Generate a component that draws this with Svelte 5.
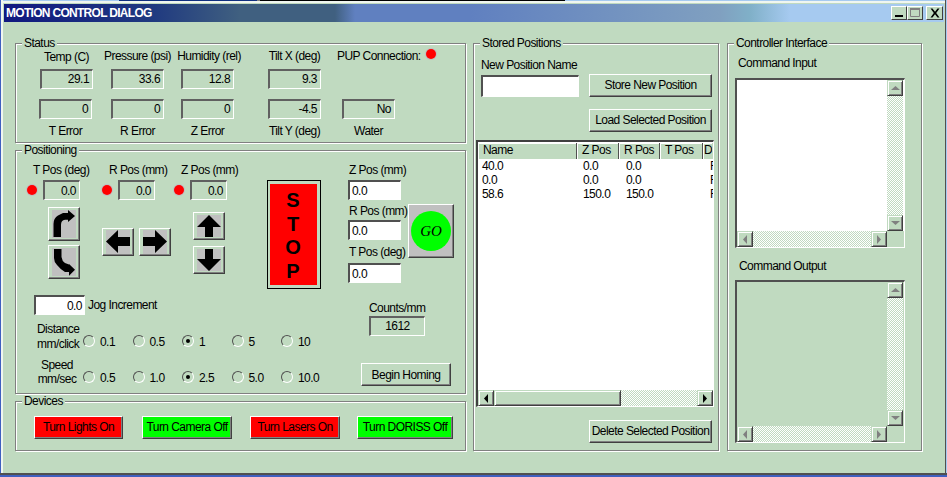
<script>
  const statusTop = [['Temp (C)', '29.1'], ['Pressure (psi)', '33.6'], ['Humidity (rel)', '12.8'], ['Tilt X (deg)', '9.3']];
  const statusBottom = [['T Error', '0'], ['R Error', '0'], ['Z Error', '0'], ['Tilt Y (deg)', '-4.5'], ['Water', 'No']];
  const readouts = ['T Pos (deg)', 'R Pos (mm)', 'Z Pos (mm)'];
  const targets = ['Z Pos (mm)', 'R Pos (mm)', 'T Pos (deg)'];
  const distances = [['0.1', false], ['0.5', false], ['1', true], ['5', false], ['10', false]];
  const speeds = [['0.5', false], ['1.0', false], ['2.5', true], ['5.0', false], ['10.0', false]];
  const devices = [['Turn Lights On', 'red', 89], ['Turn Camera Off', 'green', 90], ['Turn Lasers On', 'red', 90], ['Turn DORISS Off', 'green', 96]];
  const rows = [['40.0', '0.0', '0.0'], ['0.0', '0.0', '0.0'], ['58.6', '150.0', '150.0']];
  const columns = [['Name', 99], ['Z Pos', 42], ['R Pos', 41], ['T Pos', 43], ['D', 9]];
</script>

{#snippet scrollbars()}
  <div class="term-main">
    <div class="vbar">
      <div class="sb-btn"><svg width="9" height="6"><path d="M0 5h9L4.500 1z" fill="#808080"/></svg></div>
      <div class="track"></div>
      <div class="sb-btn"><svg width="9" height="6"><path d="M0 1h9L4.500 5z" fill="#808080"/></svg></div>
    </div>
  </div>
  <div class="hbar term-bar">
    <div class="sb-btn"><svg width="6" height="9"><path d="M5 0v9L1 4.500z" fill="#808080"/></svg></div>
    <div class="track"></div>
    <div class="sb-btn"><svg width="6" height="9"><path d="M1 0v9l4-4.500z" fill="#808080"/></svg></div>
    <div class="corner"></div>
  </div>
{/snippet}

<div class="window">
  <header class="titlebar">
    <span class="title">MOTION CONTROL DIALOG</span>
    <div class="caps">
      <button class="cap" aria-label="Minimize"><svg width="14" height="12"><path d="M3 8h8v2H3z" fill="#000"/></svg></button>
      <button class="cap" aria-label="Maximize"><svg width="14" height="12"><path d="M2.500 1.500h9v8h-9z" fill="none" stroke="#808080"/><path d="M2 1h10v2H2z" fill="#808080"/></svg></button>
      <button class="cap close" aria-label="Close"><svg width="14" height="12"><path d="M2.500 1.500h2L7 4.800 9.500 1.500h2L8.200 6l3.300 4.500h-2L7 7.200 4.500 10.500h-2L5.800 6z" fill="#000"/></svg></button>
    </div>
  </header>

  <main class="body">
    <div class="left">
      <section class="group status">
        <h2 class="legend">Status</h2>
        <div class="status-grid">
          {#each statusTop as [label, value]}
            <div class="cell top"><span class="cap-label">{label}</span><div class="readout">{value}</div></div>
          {/each}
          <div class="cell pup"><span>PUP Connection:</span><i class="led"></i></div>
          {#each statusBottom as [label, value]}
            <div class="cell bottom"><div class="readout">{value}</div><span class="cap-label">{label}</span></div>
          {/each}
        </div>
      </section>

      <section class="group positioning">
        <h2 class="legend">Positioning</h2>
        <div class="pos-top">
          <div class="axes">
            <div class="axis-heads">
              {#each readouts as label}
                <div class="axis-head">
                  <span class="axis-label">{label}</span>
                  <div class="led-row"><i class="led"></i><div class="readout small">0.0</div></div>
                </div>
              {/each}
            </div>
            <div class="jogs">
              <div class="jog-col t">
                <button class="raised icon tall" aria-label="Tilt up">
                  <svg width="24" height="28" viewBox="0 -1 24 28"><path d="M1.500 26V13Q1.500 7 6 4.500L11 2H16V-1L23 5L16 11V8.700H13Q9 9 9 14V26Z" fill="#000"/></svg>
                </button>
                <button class="raised icon tall" aria-label="Tilt down">
                  <svg width="24" height="28" viewBox="0 -1 24 28"><path d="M2 0H9.500V8Q10 12 13 14L17 15.500V15L23 20.700L17 26.700V23H13Q9 21 5 16Q2 13 2 9Z" fill="#000"/></svg>
                </button>
              </div>
              <div class="jog-row r">
                <button class="raised icon" aria-label="Left"><svg width="24" height="24" viewBox="0 0 24 24"><path d="M0 11.500L12 0V7H24V16H12V23Z" fill="#000"/></svg></button>
                <button class="raised icon" aria-label="Right"><svg width="24" height="24" viewBox="0 0 24 24"><path d="M24 11.500L12 0V7H0V16H12V23Z" fill="#000"/></svg></button>
              </div>
              <div class="jog-col z">
                <button class="raised icon" aria-label="Up"><svg width="24" height="22" viewBox="0 0 24 22"><path d="M12 0L24 12H16V22H8V12H0Z" fill="#000"/></svg></button>
                <button class="raised icon" aria-label="Down"><svg width="24" height="22" viewBox="0 0 24 22"><path d="M12 22L24 10H16V0H8V10H0Z" fill="#000"/></svg></button>
              </div>
            </div>
          </div>
          <button class="stop"><span>S</span><span>T</span><span>O</span><span>P</span></button>
          <div class="targets">
            {#each targets as label}
              <span class="target-label">{label}</span>
              <div class="field">0.0</div>
            {/each}
          </div>
          <button class="raised go"><span class="go-disc">GO</span></button>
        </div>
        <div class="pos-bottom">
          <div class="options">
            <div class="jog-inc"><div class="field jog-field">0.0</div><span>Jog Increment</span></div>
            <div class="radio-line">
              <span class="radio-head">Distance<br />mm/click</span>
              {#each distances as [label, on]}
                <span class="radio-item"><i class="radio" class:on></i>{label}</span>
              {/each}
            </div>
            <div class="radio-line">
              <span class="radio-head center">Speed<br />mm/sec</span>
              {#each speeds as [label, on]}
                <span class="radio-item"><i class="radio" class:on></i>{label}</span>
              {/each}
            </div>
          </div>
          <div class="homing">
            <span class="counts-label">Counts/mm</span>
            <div class="readout counts">1612</div>
            <button class="raised homing-btn">Begin Homing</button>
          </div>
        </div>
      </section>

      <section class="group devices">
        <h2 class="legend">Devices</h2>
        <div class="device-row">
          {#each devices as [label, tone, width]}
            <button class="raised device {tone}" style="width:{width}px">{label}</button>
          {/each}
        </div>
      </section>
    </div>

    <section class="group stored">
      <h2 class="legend">Stored Positions</h2>
      <div class="store-top">
        <div class="name-col">
          <span>New Position Name</span>
          <div class="field name-field"></div>
        </div>
        <div class="store-btns">
          <button class="raised store-btn">Store New Position</button>
          <button class="raised store-btn">Load Selected Position</button>
        </div>
      </div>
      <div class="list">
        <div class="list-head">
          {#each columns as [name, width]}
            <div class="th" style="width:{width}px">{name}</div>
          {/each}
        </div>
        <div class="list-body">
          {#each rows as [a, b, c]}
            <div class="tr"><span class="td n">{a}</span><span class="td z">{b}</span><span class="td r">{c}</span><span class="td last">F</span></div>
          {/each}
        </div>
        <div class="hbar">
          <div class="sb-btn"><svg width="6" height="9"><path d="M5 0v9L1 4.500z" fill="#000"/></svg></div>
          <div class="thumb"></div>
          <div class="track"></div>
          <div class="sb-btn"><svg width="6" height="9"><path d="M1 0v9l4-4.500z" fill="#000"/></svg></div>
        </div>
      </div>
      <div class="delete-row"><button class="raised store-btn">Delete Selected Position</button></div>
    </section>

    <section class="group controller">
      <h2 class="legend">Controller Interface</h2>
      <span class="cmd-label first">Command Input</span>
      <div class="term input-term">{@render scrollbars()}</div>
      <span class="cmd-label second">Command Output</span>
      <div class="term output-term">{@render scrollbars()}</div>
    </section>
  </main>
</div>

<style>
  :global(body) { margin: 0; background: #c0dac0; }
  * { box-sizing: border-box; }
  .window {
    position: relative;
    width: 947px; height: 477px; overflow: hidden;
    background: #c0dac0; color: #000;
    font: 12px/13px "Liberation Sans", Arial, sans-serif;
    letter-spacing: -0.55px;
    padding: 4px 3px 0 4px;
    box-shadow: inset 0 -2px 0 #3f60c0, inset 0 -4px 0 #505050, inset -1px 0 0 #a6caf0, inset -2px 0 0 #505050, inset 1px 0 0 #3f60c0, inset 3px 0 0 #f0f6f0, inset 0 1px 0 #a6caf0, inset 0 3px 0 #f0f6f0;
    display: flex; flex-direction: column;
  }
  .window::before {
    content: ""; position: absolute; left: 0; top: 0; width: 947px; height: 1px;
    background: linear-gradient(90deg, transparent 119px, #10307f 119px, #10307f 257px, #808080 257px, #808080 260px, #000 260px, #000 565px, transparent 565px);
  }
  button { font: inherit; letter-spacing: inherit; color: inherit; padding: 0; margin: 0; }
  .titlebar {
    height: 18px; flex: none;
    display: flex; align-items: center; justify-content: space-between;
    background: linear-gradient(90deg, #101880 0, #203a80 150px, #406080 236px, #406080 331px, #6080c0 351px, #6080c0 466px, #80a0c0 716px, #80b0c8 746px, #a6caf0 786px);
    padding: 0 1px 0 2px;
  }
  .title { color: #fff; font-weight: bold; font-size: 12px; letter-spacing: -0.7px; white-space: nowrap; }
  .caps { display: flex; }
  .cap {
    width: 16px; height: 14px; background: #c0dac0; border: 1px solid;
    border-color: #fff #404040 #404040 #fff; display: flex; align-items: center; justify-content: center;
  }
  .close { margin-left: 3px; width: 17px; }
  .cap svg { display: block; flex: none; }

  .body { display: flex; padding: 21px 0 0 11px; align-items: flex-start; }
  .left { width: 451px; display: flex; flex-direction: column; }

  .group { position: relative; border: 1px solid #808080; box-shadow: 1px 1px 0 #fff, inset 1px 1px 0 #fff; }
  .legend {
    position: absolute; top: -7px; left: 6px; margin: 0; padding: 0 2px;
    background: #c0dac0; font: inherit; white-space: nowrap;
  }

  .readout {
    height: 20px; width: 53px; text-align: right; padding: 2px 3px 0 0;
    border: solid; border-width: 2px 1px 1px 2px; border-color: #606060 #fff #fff #606060;
  }
  .field {
    height: 20px; width: 53px; background: #fff; border: solid; border-width: 2px 1px 1px 2px;
    border-color: #505050 #fff #fff #505050; padding: 3px 2px 0 2px;
  }
  .raised {
    background: #c0dac0; border: 1px solid; border-color: #fff #404040 #404040 #fff;
    box-shadow: inset -1px -1px 0 #808080;
    white-space: nowrap; text-align: center;
  }
  .led { display: block; flex: none; width: 10px; height: 10px; border-radius: 50%; background: #f00; box-shadow: 0 0 0 1px #c0c0c0; }

  .status { height: 100px; }
  .status-grid {
    display: grid; grid-template-columns: 71px 70px 87px 74px auto;
    padding: 6px 0 0 24px;
  }
  .cell { display: flex; flex-direction: column; align-items: flex-start; width: 53px; }
  .cap-label { white-space: nowrap; align-self: center; }
  .top .cap-label { height: 19px; }
  .top:first-child .cap-label { padding-top: 1px; }
  .top:nth-child(3) .cap-label { margin-left: 3px; }
  .pup { flex-direction: row; gap: 5px; white-space: nowrap; margin-left: -5px; width: auto; }
  .pup .led { margin-top: -1px; }
  .bottom { padding-top: 10px; }
  .bottom:nth-child(6) { margin-left: -1px; }
  .bottom .cap-label { margin-top: 6px; }

  .positioning { height: 244px; margin-top: 7px; }
  .pos-top { display: flex; padding-top: 12px; height: 144px; }
  .axes { width: 251px; padding-left: 11px; flex: none; }
  .axis-heads { display: flex; }
  .axis-head { width: 72px; display: flex; flex-direction: column; }
  .axis-head:first-child { width: 75px; }
  .axis-label { height: 17px; padding-top: 1px; margin-left: 7px; white-space: nowrap; }
  .axis-head:first-child .axis-label { margin-left: 6px; }
  .led-row { display: flex; align-items: center; gap: 6px; }
  .readout.small { width: 37px; padding-top: 3px; }
  .jogs { display: flex; margin-top: 7px; }
  .jog-col { display: flex; flex-direction: column; }
  .jog-col.t { gap: 4px; margin-left: 21px; }
  .jog-col.z { gap: 6px; margin-left: 22px; margin-top: 5px; }
  .jog-row { display: flex; gap: 5px; margin-left: 22px; margin-top: 21px; align-self: flex-start; }
  .icon { width: 32px; height: 28px; display: flex; align-items: center; justify-content: center; flex: none; }
  .icon svg { display: block; background: #c0c0c0; overflow: visible; flex: none; }
  .icon.tall { height: 34px; }
  .stop {
    width: 54px; height: 109px; margin-top: 17px; flex: none;
    background: #f00; border: 1px solid #000; font-weight: bold; font-size: 20px; line-height: 23.5px; letter-spacing: 0;
    box-shadow: inset 2px 3px 0 #c0dac0, inset -3px -3px 0 #c0dac0;
    display: flex; flex-direction: column; align-items: center; padding: 8px 2px 0 0;
  }
  .stop span { display: block; }
  .targets { width: 53px; margin-left: 27px; flex: none; display: flex; flex-direction: column; }
  .target-label { display: block; height: 17px; padding-top: 1px; margin-left: 1px; white-space: nowrap; }
  .target-label:nth-of-type(2) { height: 15px; margin-top: 5px; padding-top: 0; }
  .target-label:nth-of-type(3) { height: 17px; margin-top: 6px; padding-top: 0; }
  .go {
    width: 46px; height: 54px; margin-left: 7px; margin-top: 41px; flex: none;
    background: #c0c0c0; display: flex; align-items: center; justify-content: center;
  }
  .go-disc {
    display: flex; align-items: center; justify-content: center;
    width: 40px; height: 40px; border-radius: 50%; background: #0f0;
    font: italic 15px "Liberation Serif", serif; letter-spacing: 0;
  }

  .pos-bottom { display: flex; justify-content: space-between; padding-right: 15px; }
  .options { padding-left: 18px; }
  .jog-inc { display: flex; align-items: flex-start; gap: 3px; white-space: nowrap; }
  .jog-field { width: 51px; text-align: right; }
  .jog-inc span { margin-top: 4px; }
  .radio-line { display: flex; align-items: flex-start; height: 36px; }
  .jog-inc + .radio-line { margin-top: 6px; }
  .radio-head { width: 49px; flex: none; padding: 1px 0 0 3px; line-height: 15px; white-space: nowrap; }
  .radio-head.center { text-align: center; padding: 1px 3px 0 0; line-height: 14px; }
  .radio-item { width: 49.500px; display: flex; align-items: flex-start; gap: 5px; padding-top: 15px; white-space: nowrap; }
  .radio {
    display: block; width: 12px; height: 12px; margin-top: -1px; border-radius: 50%; position: relative; flex: none;
    background: #c0dac0; border: 1px solid; border-color: #505050 #fff #fff #505050;
  }
  .radio.on::after {
    content: ""; position: absolute; left: 3px; top: 3px; width: 4px; height: 4px; border-radius: 50%; background: #000;
  }
  .homing { width: 89px; display: flex; flex-direction: column; align-items: flex-start; }
  .counts-label { margin-left: 8px; margin-top: 7px; height: 14px; white-space: nowrap; }
  .counts { width: 56px; margin-left: 8px; text-align: center; padding: 2px 0 0; }
  .homing-btn { width: 90px; height: 23px; margin-top: 27px; padding-top: 1px; flex: none; }

  .devices { height: 50px; margin-top: 7px; }
  .device-row { display: grid; grid-template-columns: 108px 108px 107px auto; padding: 14px 0 0 18px; }
  .device { height: 23px; }
  .red { background: #f00; }
  .green { background: #0f0; }

  .stored { width: 246px; height: 408px; margin-left: 7px; flex: none; }
  .store-top { display: flex; padding: 15px 0 0 7px; height: 96px; }
  .name-col { width: 108px; flex: none; }
  .name-col span { display: block; white-space: nowrap; }
  .name-field { width: 98px; height: 22px; margin-top: 3px; }
  .store-btns { display: flex; flex-direction: column; gap: 12px; margin-top: 15px; }
  .store-btn { width: 123px; height: 23px; flex: none; }
  .list {
    width: 238px; height: 267px; margin-left: 2px; display: flex; flex-direction: column;
    background: #fff; border: solid; border-width: 2px 1px 1px 2px; border-color: #404040 #fff #fff #404040;
    overflow: hidden;
  }
  .list-head { display: flex; height: 16px; background: #c0dac0; overflow: hidden; flex: none; margin-top: 1px; }
  .th { height: 16px; padding: 1px 0 0 5px; border-right: 1px solid #505050; box-shadow: inset 1px 1px 0 #fff; flex: none; white-space: nowrap; overflow: hidden; }
  .th:last-child { border: 0; padding-left: 1px; }
  .list-body { flex: 1; background: #fff; overflow: hidden; }
  .tr { display: flex; height: 14px; line-height: 14px; }
  .td { display: block; flex: none; }
  .td.n { width: 105px; padding-left: 4px; }
  .td.z { width: 43px; }
  .td.r { width: 84px; }
  .td.last { width: 3px; overflow: hidden; }
  .hbar { display: flex; height: 16px; flex: none; background: #c0dac0; }
  .track { flex: 1; background-image: conic-gradient(#fff 25%, #c0dac0 0 50%, #fff 0 75%, #c0dac0 0); background-size: 2px 2px; }
  .sb-btn {
    width: 16px; height: 16px; flex: none; display: flex; align-items: center; justify-content: center;
    background: #c0dac0; border: 1px solid; border-color: #c0dac0 #404040 #404040 #c0dac0;
    box-shadow: inset 1px 1px 0 #fff, inset -1px -1px 0 #808080;
  }
  .sb-btn svg { display: block; flex: none; }
  .thumb { width: 127px; background: #c0dac0; border: 1px solid; border-color: #c0dac0 #404040 #404040 #c0dac0; box-shadow: inset 1px 1px 0 #fff, inset -1px -1px 0 #808080; }
  .delete-row { display: flex; justify-content: flex-end; padding: 13px 6px 0 0; }

  .controller { width: 195px; height: 408px; margin-left: 8px; flex: none; }
  .cmd-label { display: block; white-space: nowrap; height: 21px; }
  .cmd-label.first { margin: 13px 0 0 10px; }
  .cmd-label.second { margin: 12px 0 0 11px; height: 20px; }
  .term {
    width: 170px; margin-left: 7px; display: flex; flex-direction: column;
    border: solid; border-width: 2px 1px 1px 2px; border-color: #505050 #fff #fff #505050;
  }
  .input-term { height: 170px; background: linear-gradient(#fff, #fff) no-repeat 0 0 / 100% 151px; }
  .output-term { height: 163px; }
  .term-main { flex: 1; display: flex; justify-content: flex-end; min-height: 0; }
  .vbar { width: 16px; display: flex; flex-direction: column; margin-right: 1px; }
  .corner { width: 17px; background: #c0dac0; flex: none; }
</style>
